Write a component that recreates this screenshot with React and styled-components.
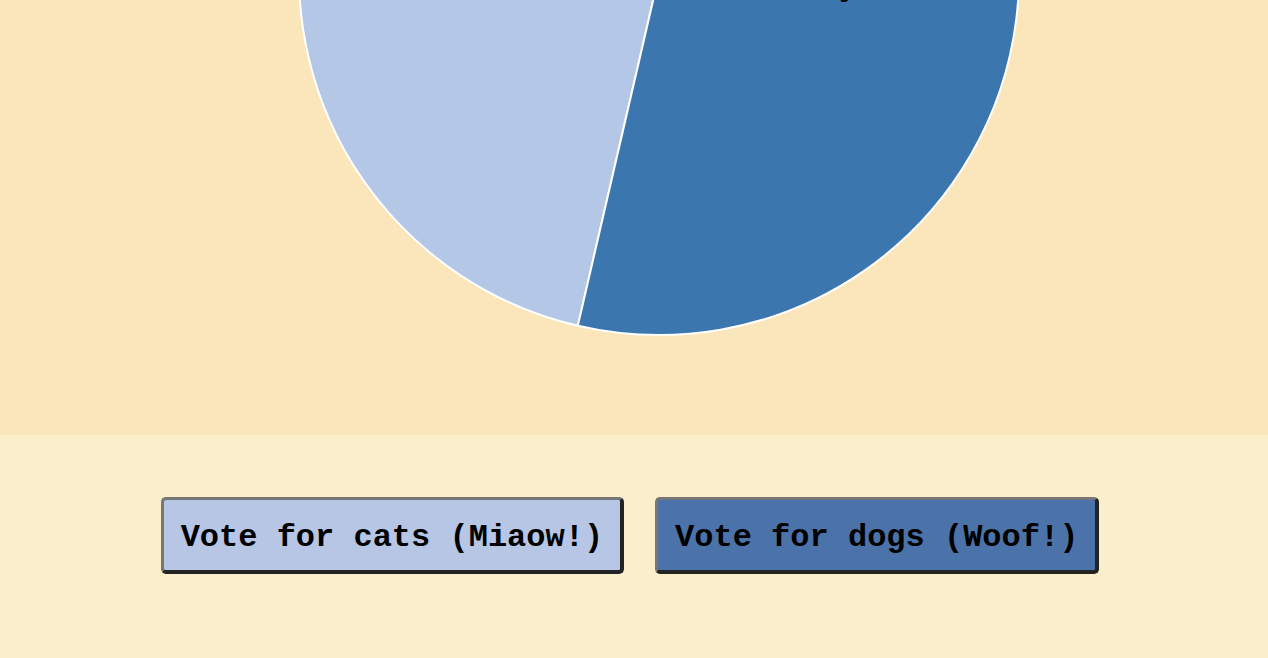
import React from "react";
import styled, { createGlobalStyle } from "styled-components";

const Global = createGlobalStyle`
  html, body { margin: 0; padding: 0; background: #FBEFCB; }
  body { font-family: "Liberation Mono", "Courier New", monospace; overflow: hidden; }
`;

const Page = styled.div`
  display: flex;
  flex-direction: column;
  width: 1268px;
  height: 658px;
`;

const ChartArea = styled.section`
  height: 435px;
  background: #FAE6BA;
  overflow: hidden;
`;

const ChartSvg = styled.svg`
  display: block;
  overflow: visible;
`;

const Controls = styled.section`
  flex: 1;
  background: #FBEFCB;
  display: flex;
  justify-content: center;
  align-items: flex-start;
  gap: 31px;
  padding: 62px 8px 0 0;
`;

const VoteButton = styled.button`
  box-sizing: border-box;
  height: 77px;
  padding: 5px 17px 0 17px;
  font-family: "Liberation Mono", "Courier New", monospace;
  font-weight: bold;
  font-size: 32px;
  color: #000;
  background: ${(p) => p.$bg};
  border-style: solid;
  border-width: 3px 4px 4px 3px;
  border-color: #767676 #232323 #232323 #767676;
  border-radius: 5px;
  cursor: pointer;
  white-space: pre;
`;

const CX = 659;
const CY = -25;
const R = 360;

function arc(a0, a1) {
  const x0 = CX + R * Math.cos(a0);
  const y0 = CY + R * Math.sin(a0);
  const x1 = CX + R * Math.cos(a1);
  const y1 = CY + R * Math.sin(a1);
  const large = a1 - a0 > Math.PI ? 1 : 0;
  return `M${CX},${CY} L${x0},${y0} A${R},${R} 0 ${large} 1 ${x1},${y1} Z`;
}

export default function App() {
  const split = Math.atan2(350, -81);
  const top = -Math.PI / 2 + 0.02;
  return (
    <>
      <Global />
      <Page>
        <ChartArea>
          <ChartSvg width="1268" height="435" viewBox="0 0 1268 435">
            <path d={arc(split, top + Math.PI * 2)} fill="#B4C7E7" stroke="#fff" strokeWidth="2" />
            <path d={arc(top, split)} fill="#3B76AF" stroke="#fff" strokeWidth="2" />
            <text
              x="858"
              y="-5"
              textAnchor="end"
              fontFamily="Liberation Mono, monospace"
              fontWeight="bold"
              fontSize="32"
              fill="#000"
            >
              Woof! Hooray
            </text>
          </ChartSvg>
        </ChartArea>
        <Controls>
          <VoteButton $bg="#B6C6E4">Vote for cats (Miaow!)</VoteButton>
          <VoteButton $bg="#4B73A9">Vote for dogs (Woof!)</VoteButton>
        </Controls>
      </Page>
    </>
  );
}
